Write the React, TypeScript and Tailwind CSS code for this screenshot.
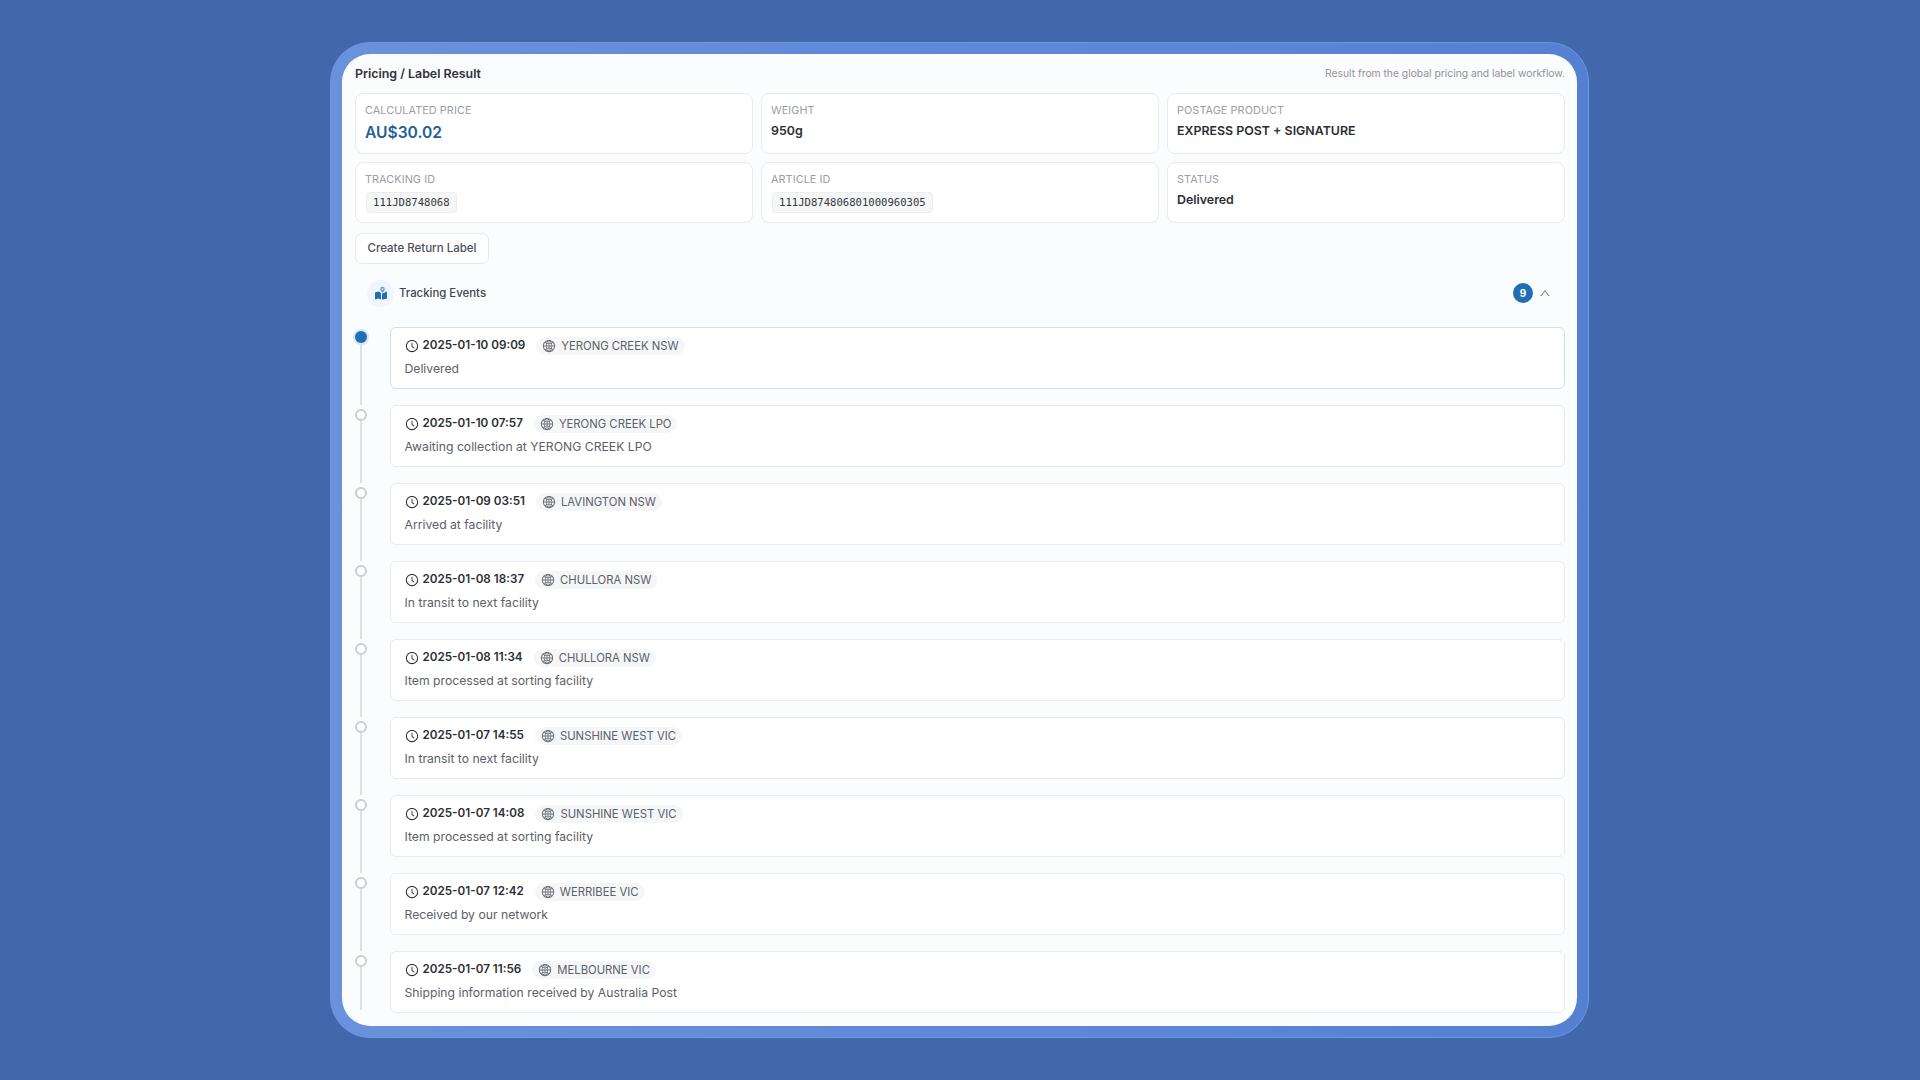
import React from "react";
import { AiOutlineClockCircle, AiOutlineGlobal, AiOutlineUp } from "react-icons/ai";

const events = [
  ["2025-01-10 09:09", "YERONG CREEK NSW", "Delivered"],
  ["2025-01-10 07:57", "YERONG CREEK LPO", "Awaiting collection at YERONG CREEK LPO"],
  ["2025-01-09 03:51", "LAVINGTON NSW", "Arrived at facility"],
  ["2025-01-08 18:37", "CHULLORA NSW", "In transit to next facility"],
  ["2025-01-08 11:34", "CHULLORA NSW", "Item processed at sorting facility"],
  ["2025-01-07 14:55", "SUNSHINE WEST VIC", "In transit to next facility"],
  ["2025-01-07 14:08", "SUNSHINE WEST VIC", "Item processed at sorting facility"],
  ["2025-01-07 12:42", "WERRIBEE VIC", "Received by our network"],
  ["2025-01-07 11:56", "MELBOURNE VIC", "Shipping information received by Australia Post"],
];

function Card({ label, children }: { label: string; children: React.ReactNode }) {
  return (
    <div className="h-[61px] rounded-[8px] border border-[#e9ebef] bg-white pl-[9px] pt-[9px]">
      <div className="text-[10.8px] leading-[16px] tracking-[0.1px] text-[#9a9da3]">{label}</div>
      {children}
    </div>
  );
}

function Code({ children }: { children: React.ReactNode }) {
  return (
    <div className="mt-[4px] ml-[1px] inline-block h-[21px] rounded-[4px] border border-[#eceded] bg-[#f5f6f6] px-[6px] font-['DejaVu_Sans_Mono',monospace] text-[10.6px] leading-[19px] text-[#33373d]">
      {children}
    </div>
  );
}

function MapIcon() {
  return (
    <svg width="14" height="15" viewBox="0 0 14 15">
      <path d="M1 6.5 L4.5 5.5 L7 7 L7 13.5 L4.5 12.5 L1 13.5 Z" fill="#1f6fb5" />
      <path d="M8 7.5 L9.5 7 L13 5.5 L13 12.5 L9.5 13.5 L8 13.5 Z" fill="#1f6fb5" />
      <path d="M8.5 0.8 a2.3 2.3 0 0 1 2.3 2.3 c0 1.5 -2.3 3.7 -2.3 3.7 s-2.3 -2.2 -2.3 -3.7 a2.3 2.3 0 0 1 2.3 -2.3 Z" fill="#5b9bd5" />
      <circle cx="8.5" cy="3.1" r="0.9" fill="#f0f5fb" />
    </svg>
  );
}

export default function App() {
  return (
    <div className="flex h-[1080px] w-full items-start bg-[#4167ad] pl-[330px] pt-[42px] font-['Inter',sans-serif]">
      <div className="h-[996px] w-[1259px] rounded-[40px] border border-[#7096de] bg-gradient-to-r from-[#6a91dc] to-[#5580d2] p-[11px]">
        <div className="flex h-[972px] flex-col rounded-[28px] bg-[#fbfcfe] pl-[13px] pr-[12px] pt-[12px]">
          <div className="flex h-[16px] items-center justify-between">
            <span className="text-[12.4px] font-semibold text-[#2f3238]">Pricing / Label Result</span>
            <span className="text-[10.3px] text-[#8f9298]">Result from the global pricing and label workflow.</span>
          </div>
          <div className="mt-[11px] grid grid-cols-3 gap-[8px]">
            <Card label="CALCULATED PRICE">
              <div className="mt-[2px] text-[15.6px] font-semibold leading-[23px] text-[#1f6098]">AU$30.02</div>
            </Card>
            <Card label="WEIGHT">
              <div className="mt-[2px] text-[12.4px] font-semibold leading-[20px] text-[#2b2e33]">950g</div>
            </Card>
            <Card label="POSTAGE PRODUCT">
              <div className="mt-[2px] text-[12.4px] font-semibold leading-[20px] text-[#2b2e33]">EXPRESS POST + SIGNATURE</div>
            </Card>
            <Card label="TRACKING ID">
              <Code>111JD8748068</Code>
            </Card>
            <Card label="ARTICLE ID">
              <Code>111JD874806801000960305</Code>
            </Card>
            <Card label="STATUS">
              <div className="mt-[1px] text-[12.4px] font-semibold leading-[22px] text-[#2b2e33]">Delivered</div>
            </Card>
          </div>
          <button className="mt-[10px] h-[31px] w-[134px] rounded-[7px] border border-[#e6e8ec] bg-white text-[11.5px] font-medium text-[#4c5057]">
            Create Return Label
          </button>
          <div className="mt-[15px] flex h-[28px] items-center justify-between pl-[12px] pr-[14px]">
            <div className="flex items-center gap-[5px]">
              <div className="flex h-[27px] w-[27px] items-center justify-center rounded-full bg-[#f0f5fb]">
                <MapIcon />
              </div>
              <span className="pt-[1px] text-[11.4px] font-medium text-[#43474e]">Tracking Events</span>
            </div>
            <div className="flex items-center gap-[6px]">
              <span className="flex h-[20px] w-[20px] items-center justify-center rounded-full bg-[#1f6fb5] text-[10px] font-bold text-white">9</span>
              <AiOutlineUp className="text-[12px] text-[#7d8187]" />
            </div>
          </div>
          <div className="mt-[20px] flex flex-col">
            {events.map(([time, place, text], i) => (
              <div key={time} className={`flex ${i === 8 ? "" : "pb-[16px]"}`}>
                <div className={`flex w-[34.5px] flex-col items-start ${i === 8 ? "pb-[3px]" : "-mb-[16px]"}`}>
                  <div className="flex w-[12px] flex-1 flex-col items-center pt-[4px]">
                    {i === 0 ? (
                      <div className="h-[12px] w-[12px] shrink-0 rounded-full bg-[#1f6fb5] shadow-[0_0_0_2px_#d6e6f6]" />
                    ) : (
                      <div className="h-[12px] w-[12px] shrink-0 rounded-full border-2 border-[#c9ced6] bg-white" />
                    )}
                    <div className="w-[2px] flex-1 bg-[#dde0e5]" />
                  </div>
                </div>
                <div
                  className={`h-[62px] flex-1 rounded-[6px] border bg-white pl-[14px] pt-[9px] ${
                    i === 0 ? "border-[#cfe0f3]" : "border-[#e9ebef]"
                  }`}
                >
                  <div className="flex h-[18px] items-center">
                    <AiOutlineClockCircle className="mr-[4px] text-[14px] text-[#2b2e33]" />
                    <span className="text-[11.7px] font-semibold text-[#2b2e33]">{time}</span>
                    <span className="ml-[11px] flex h-[18px] items-center gap-[5px] rounded-full bg-[#f5f6f7] px-[6px] text-[11.3px] text-[#5c6067]">
                      <AiOutlineGlobal className="text-[14px] text-[#6b6f75]" />
                      {place}
                    </span>
                  </div>
                  <div className="mt-[5px] text-[12.2px] leading-[18px] text-[#5c6067]">{text}</div>
                </div>
              </div>
            ))}
          </div>
        </div>
      </div>
    </div>
  );
}
